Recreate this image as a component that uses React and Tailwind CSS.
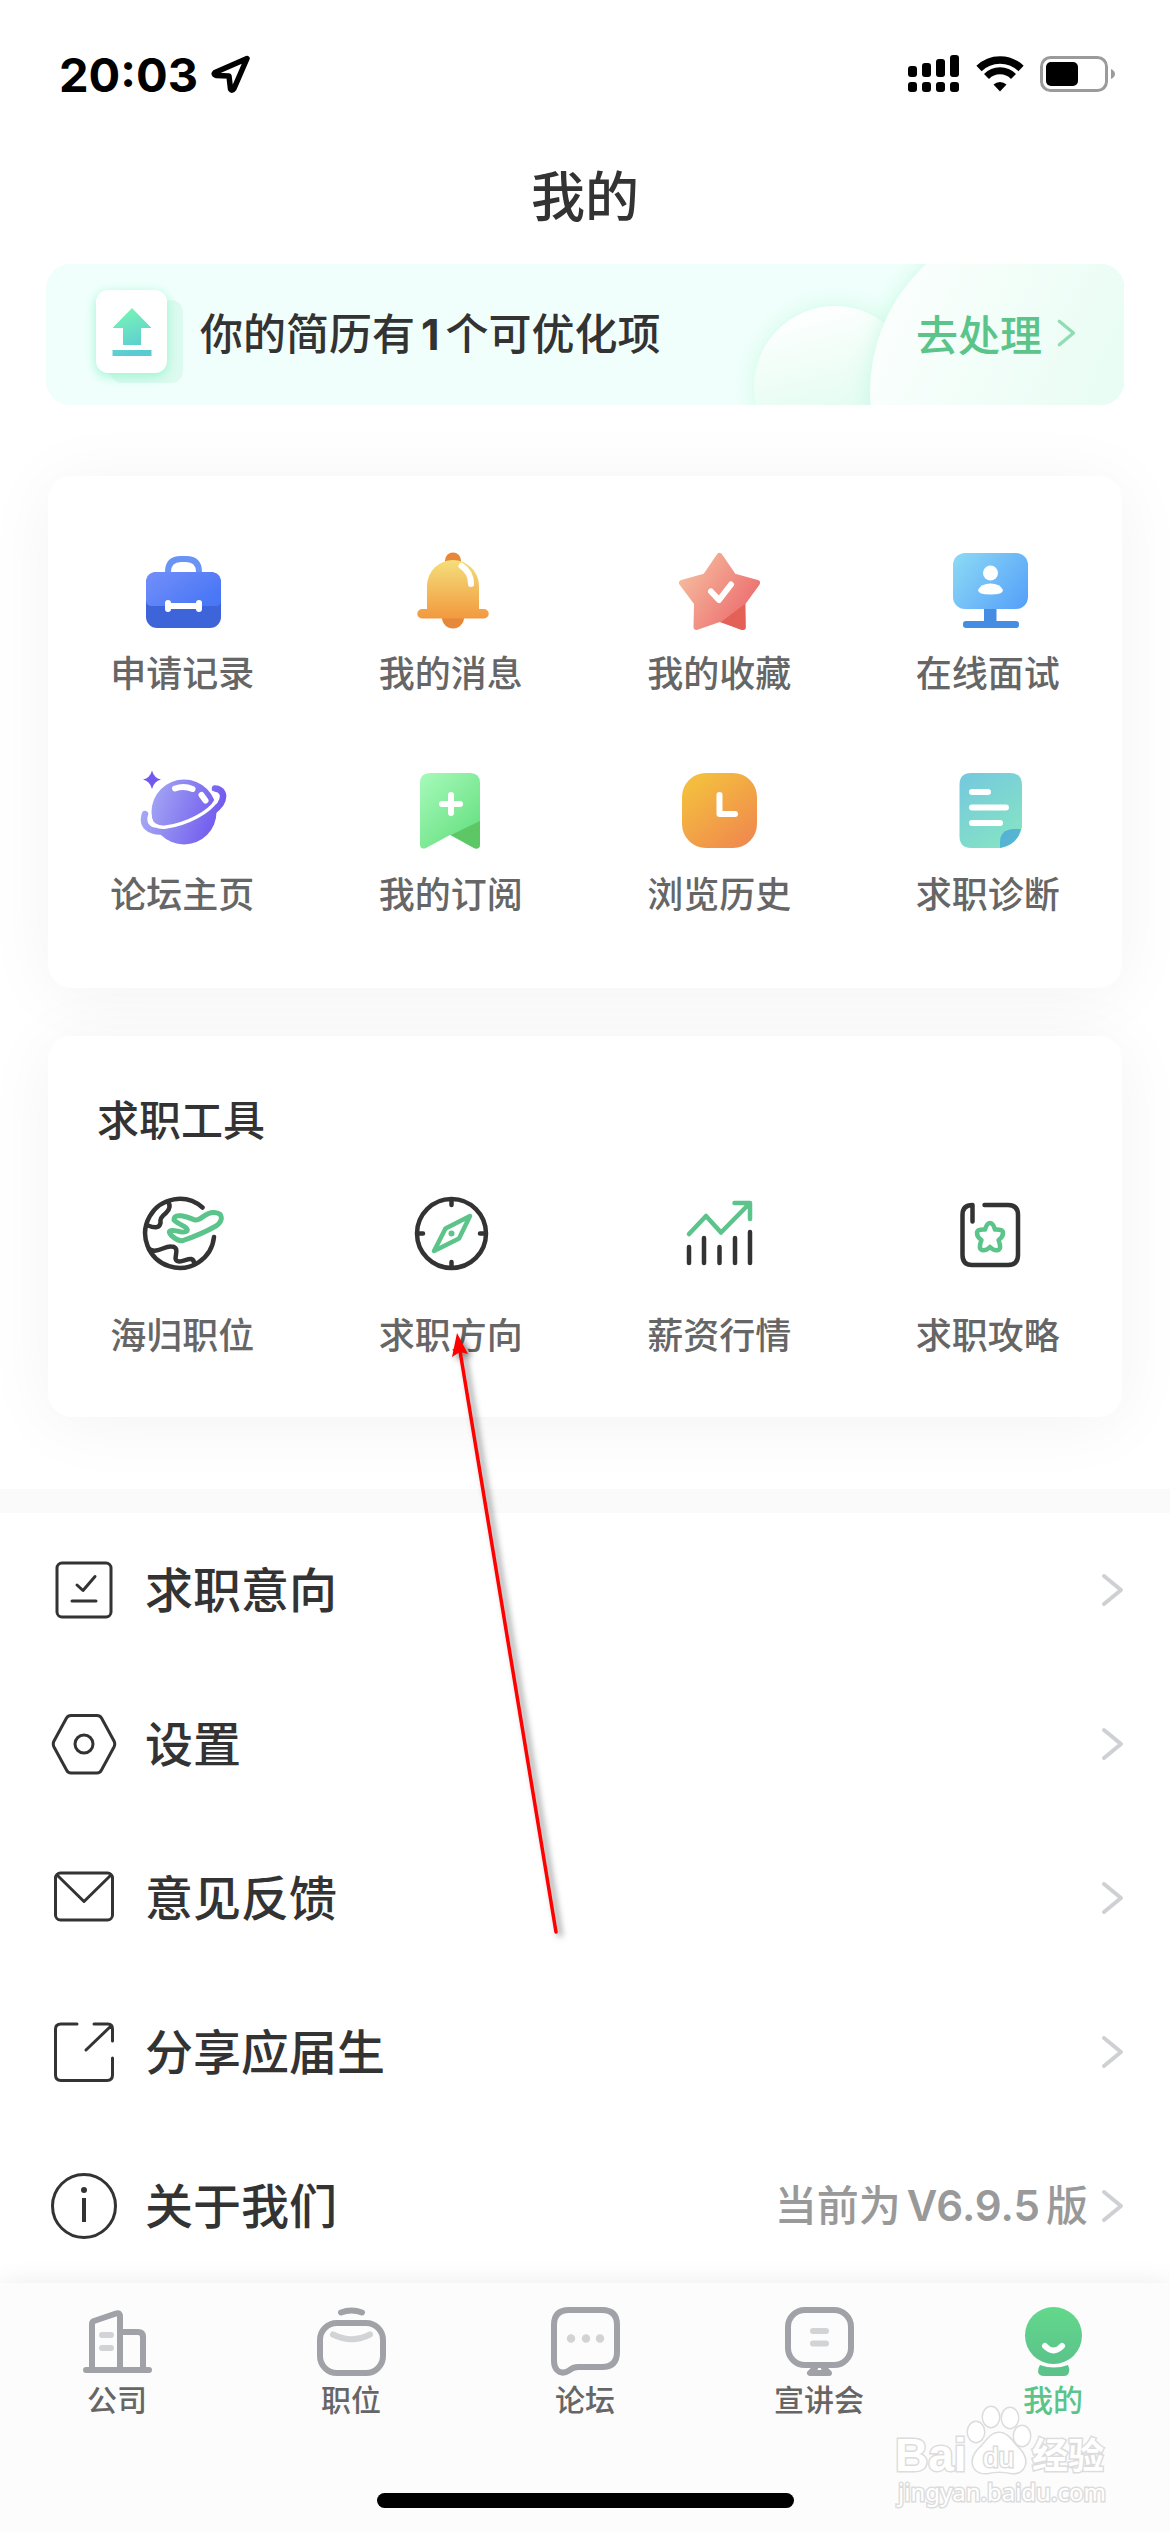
import React from "react";

const INK = "#333333";
const GREEN = "#5ac48a";

function LocationIcon() {
  return (
    <svg viewBox="0 0 42 40" className="w-[42px] h-10" fill="none" aria-hidden="true">
      <path d="M37 4.500 L5 18.500 Q3 20.500 6 21.500 L19 22 L20.500 35 Q22 37.500 24 34.500 Z" stroke="#000" strokeWidth="5.500" strokeLinejoin="round" />
    </svg>
  );
}

function CellularIcon() {
  return (
    <svg viewBox="0 0 52 38" className="w-[52px] h-[38px]" aria-hidden="true">
      <rect x="0" y="11" width="9" height="11" rx="3" />
      <rect x="14" y="8" width="9" height="14" rx="3" />
      <rect x="28" y="4" width="9" height="18" rx="3" />
      <rect x="42" y="0" width="9" height="22" rx="3" />
      <rect x="0" y="27" width="9" height="10" rx="3" />
      <rect x="14" y="27" width="9" height="10" rx="3" />
      <rect x="28" y="27" width="9" height="10" rx="3" />
      <rect x="42" y="27" width="9" height="10" rx="3" />
    </svg>
  );
}

function WifiIcon() {
  return (
    <svg viewBox="0 0 48 36" className="w-12 h-9" fill="none" aria-hidden="true">
      <path d="M3 12.500 A30 30 0 0 1 45 12.500" stroke="#000" strokeWidth="7.500" />
      <path d="M10.500 20.500 A19 19 0 0 1 37.500 20.500" stroke="#000" strokeWidth="7" />
      <path d="M24 35.500 L17.500 28.500 A9.500 9.500 0 0 1 30.500 28.500 Z" fill="#000" />
    </svg>
  );
}

function BatteryIcon() {
  return (
    <svg viewBox="0 0 76 36" className="w-[76px] h-9" aria-hidden="true">
      <rect x="1.500" y="1.500" width="65" height="33" rx="9" fill="none" stroke="#9b9b9b" strokeWidth="3" />
      <rect x="6" y="6" width="32" height="24" rx="5" />
      <path d="M71 13 Q75 15 75 18 Q75 21 71 23 Z" fill="#9b9b9b" />
    </svg>
  );
}

function ResumeIcon() {
  return (
    <div className="relative w-[88px] h-[93px] mt-1">
      <div className="absolute left-[14px] top-[10px] w-[73px] h-[83px] rounded-xl bg-[#ddfaf0]" />
      <div className="absolute left-0 top-0 w-[71px] h-[83px] rounded-xl bg-white shadow-[0_3px_12px_#98f5d0] flex items-center justify-center">
        <svg viewBox="0 0 40 48" className="w-10 h-12" aria-hidden="true">
          <defs>
            <linearGradient id="resume" x1="0" y1="0" x2="0.3" y2="1">
              <stop offset="0" stopColor="#7bf8b3" />
              <stop offset="1" stopColor="#5bcbd3" />
            </linearGradient>
          </defs>
          <path d="M20 0 L39.500 20 H29 V37 H11 V20 H0.500 Z M0.500 42 H39.500 V48 H0.500 Z" fill="url(#resume)" />
        </svg>
      </div>
    </div>
  );
}

function BannerArt() {
  return (
    <svg viewBox="0 0 400 141" className="absolute right-0 top-0 w-[400px] h-[141px]" aria-hidden="true">
      <defs>
        <linearGradient id="bubbleSmall" x1="0.300" y1="0" x2="0.500" y2="0.800">
          <stop offset="0" stopColor="#ffffff" />
          <stop offset="1" stopColor="#dffcef" />
        </linearGradient>
        <linearGradient id="bubbleLarge" x1="0" y1="0.300" x2="0.900" y2="0.700">
          <stop offset="0" stopColor="#fbfffd" />
          <stop offset="1" stopColor="#e2fcf1" />
        </linearGradient>
        <filter id="bubbleGlow" x="-30%" y="-30%" width="160%" height="160%">
          <feGaussianBlur stdDeviation="11" />
        </filter>
      </defs>
      <circle cx="111" cy="123" r="82" fill="#c9f9e4" opacity="0.8" filter="url(#bubbleGlow)" />
      <circle cx="111" cy="123" r="81" fill="url(#bubbleSmall)" />
      <circle cx="320" cy="128" r="174" fill="#bff8df" opacity="0.8" filter="url(#bubbleGlow)" />
      <circle cx="320" cy="128" r="174" fill="url(#bubbleLarge)" />
    </svg>
  );
}

function Chevron({ color, className }) {
  return (
    <svg viewBox="0 0 24 36" className={`shrink-0 ${className}`} fill="none" aria-hidden="true">
      <path d="M4 4 L21 18 L4 32" stroke={color} strokeWidth="4" strokeLinecap="round" strokeLinejoin="round" />
    </svg>
  );
}

function GridIcon({ children }) {
  return (
    <svg viewBox="0 0 90 90" className="w-[90px] h-[90px]" fill="none" strokeLinecap="round" strokeLinejoin="round" aria-hidden="true">
      {children}
    </svg>
  );
}

function BriefcaseIcon() {
  return (
    <GridIcon>
      <defs>
        <linearGradient id="caseTop" x1="0" y1="0" x2="1" y2="0.600">
          <stop offset="0" stopColor="#738ffa" />
          <stop offset="1" stopColor="#4a77f5" />
        </linearGradient>
      </defs>
      <path d="M31 28 V26 Q31 13 44 13 H49 Q62 13 62 26 V28" stroke="#6a93f6" strokeWidth="6" strokeLinecap="butt" />
      <rect x="9" y="26" width="75" height="56" rx="11" fill="#3d64d8" />
      <path d="M20 26 H73 Q84 26 84 37 V54 Q84 60 78 60 H15 Q9 60 9 54 V37 Q9 26 20 26 Z" fill="url(#caseTop)" />
      <path d="M31 57 V63 M62 57 V63 M31 60 H62" stroke="#fff" strokeWidth="6" />
    </GridIcon>
  );
}

function BellIcon() {
  return (
    <GridIcon>
      <defs>
        <linearGradient id="bell" x1="0" y1="0" x2="0" y2="1">
          <stop offset="0" stopColor="#f4df7a" />
          <stop offset="1" stopColor="#f2993f" />
        </linearGradient>
      </defs>
      <circle cx="47" cy="14.500" r="8" fill="#e6873a" />
      <circle cx="47" cy="71.500" r="11" fill="#e6873a" />
      <path d="M47 14 A26 26 0 0 1 73 40 V63 H78 A4.700 4.700 0 0 1 78 72.500 H16 A4.700 4.700 0 0 1 16 63 H21 V40 A26 26 0 0 1 47 14 Z" fill="url(#bell)" />
      <path d="M55.500 20 Q65 26 65 38" stroke="#fff" strokeWidth="6" />
    </GridIcon>
  );
}

function StarIcon() {
  return (
    <GridIcon>
      <defs>
        <linearGradient id="star" gradientUnits="userSpaceOnUse" x1="14" y1="22" x2="74" y2="62">
          <stop offset="0" stopColor="#f5b89b" />
          <stop offset="1" stopColor="#ed7272" />
        </linearGradient>
      </defs>
      <path d="M45.500 10 L59.500 30.500 L83 37 L68.500 57 L69 81 L45.500 73 L22.500 81 L23 57 L8 37 L31.500 30.500 Z" fill="url(#star)" stroke="url(#star)" strokeWidth="6" />
      <path d="M71 58 V81 Q71 84.500 67.500 84 L47 76 Z" fill="#e46158" />
      <path d="M37 45.500 L45 54 L57 38.500" stroke="#fff" strokeWidth="6" />
    </GridIcon>
  );
}

function MonitorIcon() {
  return (
    <GridIcon>
      <defs>
        <linearGradient id="monitor" x1="0" y1="0.200" x2="1" y2="0.800">
          <stop offset="0" stopColor="#89d6f5" />
          <stop offset="1" stopColor="#58a3f9" />
        </linearGradient>
      </defs>
      <path d="M41 62 H53.500 V76 H41 Z" fill="#448de2" />
      <rect x="20" y="75" width="56" height="7" rx="3" fill="#448de2" />
      <rect x="10" y="7" width="75" height="56" rx="12" fill="url(#monitor)" />
      <circle cx="47.500" cy="27" r="7.500" fill="#fff" />
      <path d="M35 44 Q38 37.500 47.500 37.500 Q57 37.500 60 44 Q60 48.500 47.500 48.500 Q35 48.500 35 44 Z" fill="#fff" />
    </GridIcon>
  );
}

function PlanetIcon() {
  return (
    <GridIcon>
      <defs>
        <linearGradient id="planet" gradientUnits="userSpaceOnUse" x1="12" y1="32" x2="82" y2="56">
          <stop offset="0" stopColor="#a3a6f4" />
          <stop offset="1" stopColor="#7059ee" />
        </linearGradient>
      </defs>
      <circle cx="47" cy="45" r="32.500" fill="url(#planet)" />
      <path d="M8 47 C4 59 13 65.500 26 64.500 C49 62 76 48 83.500 37 C89 28 85 22 78 21.500" stroke="url(#planet)" strokeWidth="6.500" />
      <path d="M13 50 C14 58 21 61 29 60 C50 57 73 45 79 33.500 C80 30 79 27 76 26" stroke="#fff" strokeWidth="3.500" />
      <path d="M38 21.500 Q47 18.500 55.500 22" stroke="#fff" strokeWidth="6" />
      <path d="M64.500 28 L68.500 33.500" stroke="#fff" strokeWidth="6" />
      <path d="M15 3.500 Q17 11 24 12.500 Q17 14 15 22 Q13 14 6 12.500 Q13 11 15 3.500 Z" fill="#7059ee" />
    </GridIcon>
  );
}

function BookmarkIcon() {
  return (
    <GridIcon>
      <defs>
        <linearGradient id="bookmark" x1="0" y1="0" x2="0.800" y2="1">
          <stop offset="0" stopColor="#a7fabb" />
          <stop offset="1" stopColor="#65df80" />
        </linearGradient>
      </defs>
      <path d="M24 6 H64 Q74 6 74 16 V77 Q74 83 68 81 L44 68 L20 81 Q14 83 14 77 V16 Q14 6 24 6 Z" fill="url(#bookmark)" />
      <path d="M74 54 V77 Q74 83 68 81 L45 68 Z" fill="#5dc766" />
      <path d="M45 28 V46 M36 37 H54" stroke="#fff" strokeWidth="6" />
    </GridIcon>
  );
}

function ClockIcon() {
  return (
    <GridIcon>
      <defs>
        <linearGradient id="clock" x1="0.200" y1="0.100" x2="0.850" y2="0.950">
          <stop offset="0" stopColor="#f4bd3f" />
          <stop offset="1" stopColor="#f08a4d" />
        </linearGradient>
      </defs>
      <rect x="8" y="6" width="75" height="75" rx="24" fill="url(#clock)" />
      <path d="M45.500 28 V47 H61" stroke="#fff" strokeWidth="6" />
    </GridIcon>
  );
}

function DocIcon() {
  return (
    <GridIcon>
      <defs>
        <linearGradient id="doc" x1="0" y1="0" x2="0.600" y2="1">
          <stop offset="0" stopColor="#74c8de" />
          <stop offset="1" stopColor="#84e2c6" />
        </linearGradient>
      </defs>
      <path d="M28 6 H67 Q79 6 79 18 V60 Q75 78 57 81 H28 Q16.500 81 16.500 69 V18 Q16.500 6 28 6 Z" fill="url(#doc)" />
      <path d="M78 62 H70 Q57 63 57 75 V81 Q74 78 78 62 Z" fill="#55b4d4" />
      <path d="M29 25 H45 M29 40.500 H63 M29 56 H57" stroke="#fff" strokeWidth="6" />
    </GridIcon>
  );
}

function GlobePlaneIcon() {
  return (
    <GridIcon>
      <g stroke={INK} strokeWidth="4.500">
        <path d="M65.500 18.500 A34.500 34.500 0 1 0 77 48" />
        <path d="M31 13 Q35 18 29 24 C24 28 23 30 23.500 34 Q22 41 11 36.500" />
        <path d="M12 60 C20 65 27 57 34 57.500 C46 58 33 72 42 72.500 C48 73 56 65 57.500 75" />
      </g>
      <path
        d="M37 31 C37 23 50 28 58 31 C65 32 67 23 77 23.500 C87 24 86 32 79 37 Q65 45 46 51.500 C40 53 30 44 33 42 C36 39 46 46 50 42 C52 38 42 36 37 31 Z"
        stroke={GREEN}
        strokeWidth="5"
      />
    </GridIcon>
  );
}

function CompassIcon() {
  return (
    <GridIcon>
      <circle cx="45.500" cy="44.500" r="34.500" stroke={INK} strokeWidth="4.500" />
      <path d="M45.500 11 V16 M45.500 73 V78 M12 44.500 H17 M74 44.500 H79" stroke={INK} strokeWidth="4.500" />
      <path d="M64 27 L53 49.500 L28 62 L39.500 39.500 Z" stroke={GREEN} strokeWidth="4.500" />
      <circle cx="45.500" cy="44.500" r="3" fill={GREEN} />
    </GridIcon>
  );
}

function ChartIcon() {
  return (
    <GridIcon>
      <path d="M15 45 L32 27 L47 43.500 L75 15 M60.500 14 H76 V30" stroke={GREEN} strokeWidth="4.500" />
      <path d="M15 58 V74 M30 49 V74 M45.500 58 V74 M61 49 V74 M76 43 V74" stroke={INK} strokeWidth="4.500" />
    </GridIcon>
  );
}

function GuideIcon() {
  return (
    <GridIcon>
      <path d="M41.500 16 H65 Q75 16 75 26 V66 Q75 76 65 76 H29 Q19.500 76 19.500 66 V26 Q19.500 16 29.500 16 V32.500" stroke={INK} strokeWidth="4.500" />
      <path
        d="M47 34 Q50 34 52 40.500 Q60 40 60 44 Q60 48 55.500 51 Q59 60 55 61 Q51 62 47 58 Q43 62 39 61 Q35 60 38.500 51 Q34 48 34 44 Q34 40 42 40.500 Q44 34 47 34 Z"
        stroke={GREEN}
        strokeWidth="4.500"
      />
    </GridIcon>
  );
}

function ListIcon({ children }) {
  return (
    <svg viewBox="0 0 66 66" className="w-[66px] h-[66px] shrink-0" fill="none" stroke={INK} strokeWidth="3" strokeLinecap="round" strokeLinejoin="round" aria-hidden="true">
      {children}
    </svg>
  );
}

function TabIcon({ children }) {
  return (
    <svg viewBox="0 0 70 70" className="w-[70px] h-[70px]" fill="none" stroke="#a0a2a7" strokeWidth="6" strokeLinecap="round" strokeLinejoin="round" aria-hidden="true">
      {children}
    </svg>
  );
}

const features = [
  { label: "申请记录", Icon: BriefcaseIcon },
  { label: "我的消息", Icon: BellIcon },
  { label: "我的收藏", Icon: StarIcon },
  { label: "在线面试", Icon: MonitorIcon },
  { label: "论坛主页", Icon: PlanetIcon },
  { label: "我的订阅", Icon: BookmarkIcon },
  { label: "浏览历史", Icon: ClockIcon },
  { label: "求职诊断", Icon: DocIcon },
];

const tools = [
  { label: "海归职位", Icon: GlobePlaneIcon },
  { label: "求职方向", Icon: CompassIcon },
  { label: "薪资行情", Icon: ChartIcon },
  { label: "求职攻略", Icon: GuideIcon },
];

const settings = [
  {
    label: "求职意向",
    icon: (
      <>
        <rect x="6" y="6" width="54" height="54" rx="5" />
        <path d="M26 28 L32 33.500 L44 19.500 M21 44 H45" />
      </>
    ),
  },
  {
    label: "设置",
    icon: (
      <>
        <path d="M20 4.500 H46 Q49 4.500 50.500 7 L63 30 Q64.500 33 63 36 L50.500 59 Q49 62 46 62 H20 Q17 62 15.500 59 L3 36 Q1.500 33 3 30 L15.500 7 Q17 4.500 20 4.500 Z" />
        <circle cx="33" cy="33" r="9" />
      </>
    ),
  },
  {
    label: "意见反馈",
    icon: (
      <>
        <rect x="4.500" y="8" width="57" height="47" rx="5" />
        <path d="M6 10 L33 36.500 L60 10" />
      </>
    ),
  },
  {
    label: "分享应届生",
    icon: (
      <path d="M26 5 H10 Q4.500 5 4.500 10 V56 Q4.500 61.500 10 61.500 H56 Q61.500 61.500 61.500 56 V39 M43 5 H57 Q61.500 5 61.500 10 V22 M35 31 L60 7" />
    ),
  },
  {
    label: "关于我们",
    version: "V6.9.5",
    icon: (
      <>
        <circle cx="33" cy="33" r="31.500" />
        <circle cx="33" cy="17" r="3" fill={INK} stroke="none" />
        <path d="M33 25 V49" strokeWidth="4" strokeLinecap="butt" />
      </>
    ),
  },
];

const tabs = [
  {
    label: "公司",
    icon: (
      <>
        <path d="M4 63 H67 M10 62 V17 Q10 15 12 14 L34 6.500 Q38 5 38 10 V62 M39 25 H56 Q61 25 61 30 V62" />
        <path d="M20 28 H29 M20 41 H29" stroke="#d2d3d5" />
      </>
    ),
  },
  {
    label: "职位",
    icon: (
      <>
        <path d="M25 5.500 Q35.500 1.500 46 5.500" />
        <rect x="4" y="16" width="63" height="50" rx="17" />
        <path d="M17 27.500 Q36 37 54 27.500" stroke="#d2d3d5" />
      </>
    ),
  },
  {
    label: "论坛",
    icon: (
      <>
        <path d="M19 3 H52 Q67 3 67 18 V45 Q67 60 52 60 H28 Q23 60 19 63.500 Q12 68 7 63 Q4 60 4 54 V18 Q4 3 19 3 Z" />
        <path d="M21 31.500 V31.600 M36 31.500 V31.600 M50 31.500 V31.600" stroke="#d2d3d5" strokeWidth="8.500" />
      </>
    ),
  },
  {
    label: "宣讲会",
    icon: (
      <>
        <rect x="4" y="3" width="63" height="55" rx="17" />
        <path d="M31 61 L26 66 H45 L40 61" />
        <path d="M29 24 H42 M29 36.500 H42" stroke="#d2d3d5" />
      </>
    ),
  },
  {
    label: "我的",
    active: true,
    icon: (
      <g stroke="none">
        <defs>
          <linearGradient id="mine" x1="0" y1="0" x2="0" y2="1">
            <stop offset="0" stopColor="#63d88c" />
            <stop offset="1" stopColor="#5bc38a" />
          </linearGradient>
        </defs>
        <circle cx="35.500" cy="28.500" r="28.500" fill="url(#mine)" />
        <path d="M22 58 Q36 63 50 58 Q52 62 51 65 Q50 69 46 69 H26 Q21 69 20 65 Q20 61 22 58 Z" fill="#5bc38a" />
        <path d="M27 39 Q35.500 48 44 39" stroke="#fff" strokeWidth="6" />
      </g>
    ),
  },
];

function IconGrid({ items, labelClass }) {
  return (
    <div className="grid grid-cols-4 gap-y-[72px]">
      {items.map(({ label, Icon }) => (
        <button key={label} type="button" className="flex flex-col items-center">
          <Icon />
          <span className={`text-4xl leading-[48px] font-medium text-[#666666] ${labelClass}`}>{label}</span>
        </button>
      ))}
    </div>
  );
}

function StatusBar() {
  return (
    <div className="flex items-center justify-between h-[148px] pl-[59px] pr-[54px]">
      <div className="flex items-center gap-3">
        <span className="text-[47px] leading-none font-bold text-black font-['Inter',sans-serif]">20:03</span>
        <LocationIcon />
      </div>
      <div className="flex items-center gap-4">
        <CellularIcon />
        <WifiIcon />
        <BatteryIcon />
      </div>
    </div>
  );
}

function Watermark() {
  return (
    <svg viewBox="0 0 220 110" className="absolute right-[58px] top-[120px] w-[220px] h-[110px]" fill="#fff" stroke="#dcdcdc" strokeWidth="3" paintOrder="stroke" aria-hidden="true">
      <text x="3" y="68" fontSize="46" fontWeight="700" fontFamily="Liberation Sans, sans-serif">Bai</text>
      <path d="M107 30 C116 30 120 39 128 47 C138 58 132 71 120 70 Q107 67 95 70 C80 71 77 57 86 47 C95 39 98 30 107 30 Z" />
      <ellipse cx="84" cy="29" rx="8" ry="10" />
      <ellipse cx="99" cy="14" rx="8" ry="10" />
      <ellipse cx="118" cy="15" rx="8" ry="10" />
      <ellipse cx="130" cy="33" rx="8" ry="10" />
      <text x="91" y="64" fontSize="28" fontFamily="Liberation Sans, sans-serif">du</text>
      <text x="140" y="66" fontSize="36" fontWeight="700" fontFamily="Noto Sans CJK SC, sans-serif">经验</text>
      <text x="6" y="98" fontSize="24" fontFamily="Noto Sans, sans-serif">jingyan.baidu.com</text>
    </svg>
  );
}

function PointerArrow() {
  return (
    <svg viewBox="0 0 130 620" className="absolute left-[446px] top-[1325px] w-[130px] h-[620px] pointer-events-none drop-shadow-[4px_3px_3px_rgba(0,0,0,0.5)]" aria-hidden="true">
      <path d="M14 26 L110 607" stroke="#ff0000" strokeWidth="3.500" strokeLinecap="round" />
      <path d="M11 8 L22 29 L14 27 L6 32 Z" fill="#ff0000" />
    </svg>
  );
}

function App() {
  return (
    <div className="relative w-full bg-white text-[#333333] font-['Noto_Sans_CJK_SC',sans-serif]">
      <StatusBar />
      <header className="flex items-center justify-center h-[98px] pb-1.5">
        <h1 className="text-[54px] leading-none font-medium">我的</h1>
      </header>

      <main>
        <section className="relative overflow-hidden mt-[18px] mx-[46px] h-[141px] rounded-3xl bg-[#f1fffc] flex items-center justify-between pl-[50px] pr-12">
          <BannerArt />
          <div className="relative flex items-center gap-4">
            <ResumeIcon />
            <p className="pb-1 text-[43px] leading-none font-medium whitespace-nowrap">
              你的简历有<span className="mx-1.5 font-bold font-['Inter',sans-serif]">1</span>个可优化项
            </p>
          </div>
          <button type="button" className="relative flex items-center gap-3.5 pb-1 text-[42px] leading-none font-medium text-[#5ac48a]">
            去处理
            <Chevron color="#90dcb4" className="w-5 h-[30px]" />
          </button>
        </section>

        <section className="relative mt-[71px] mx-12 rounded-3xl bg-white pt-[70px] pb-[72px] shadow-[0_6px_70px_rgba(0,0,0,0.05)]">
          <IconGrid items={features} labelClass="mt-[11px]" />
        </section>

        <section className="relative mt-12 mx-12 rounded-3xl bg-white pt-[57px] pb-[60px] shadow-[0_6px_70px_rgba(0,0,0,0.05)]">
          <h2 className="mb-[46px] pl-[49px] text-[42px] leading-[50px] font-medium">求职工具</h2>
          <IconGrid items={tools} labelClass="mt-[30px]" />
        </section>

        <div className="relative mt-[72px] h-6 bg-[#fafafa]" />

        <ul className="relative bg-white">
          {settings.map(({ label, version, icon }) => (
            <li key={label}>
              <a href="#" className="flex items-center h-[154px] pl-[51px] pr-[46px]">
                <ListIcon>{icon}</ListIcon>
                <span className="ml-7 pb-1.5 text-5xl leading-none font-medium">{label}</span>
                <span className="ml-auto mr-3 pb-1 text-[42px] leading-none font-medium text-[#999999]">
                  {version && (
                    <>
                      当前为<span className="mx-1.5 font-semibold font-['Inter',sans-serif]">{version}</span>版
                    </>
                  )}
                </span>
                <Chevron color="#cfd0d3" className="w-6 h-9" />
              </a>
            </li>
          ))}
        </ul>
      </main>

      <nav className="relative bg-[#fcfcfc] pt-6 pb-6 shadow-[0_0_24px_rgba(0,0,0,0.08)]">
        <div className="grid grid-cols-5">
          {tabs.map(({ label, icon, active }) => (
            <a key={label} href="#" className="flex flex-col items-center gap-px">
              <TabIcon>{icon}</TabIcon>
              <span className={`text-3xl leading-10 font-medium ${active ? "text-[#5ac48a]" : "text-[#666666]"}`}>{label}</span>
            </a>
          ))}
        </div>
        <div className="mt-[75px] mx-auto w-[417px] h-[15px] rounded-full bg-black" />
        <Watermark />
      </nav>

      <PointerArrow />
    </div>
  );
}

export default App;
